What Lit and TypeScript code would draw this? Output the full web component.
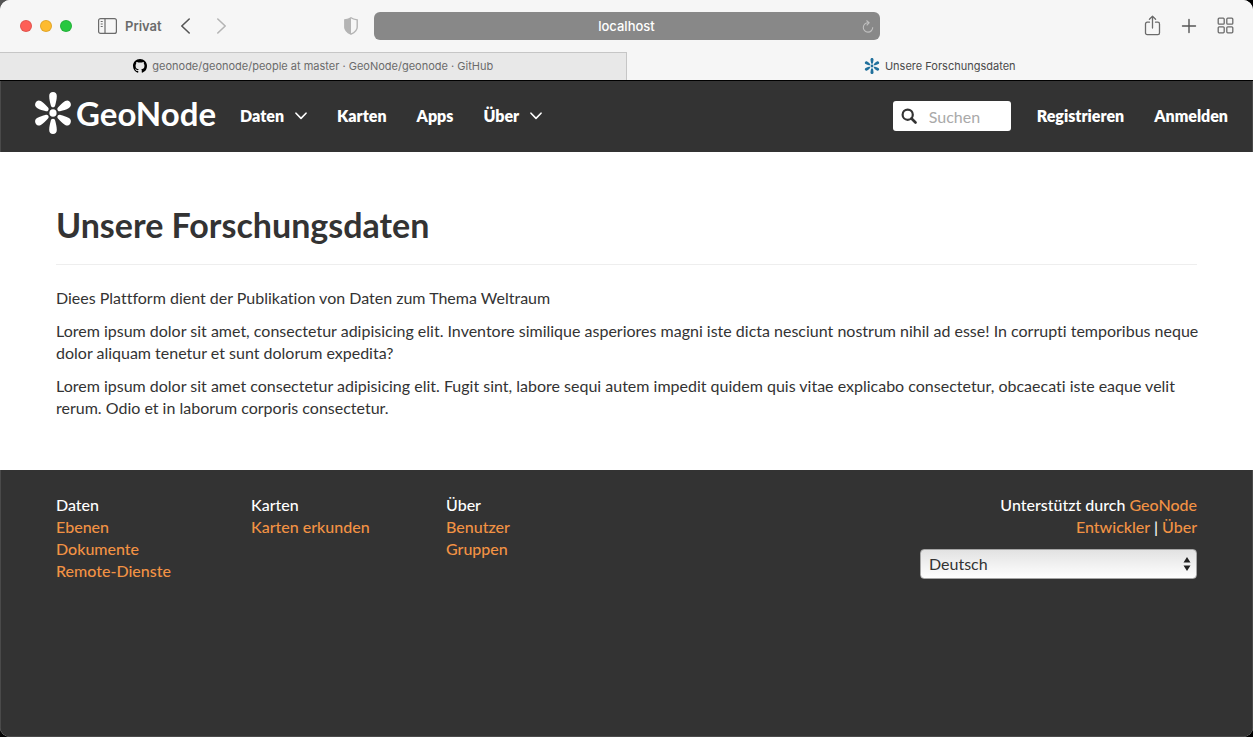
import { LitElement, html, css, svg } from "lit";
import { customElement, state } from "lit/decorators.js";

const petals = (color: string) => svg`
  <g fill=${color}>
    ${[0, 60, 120, 180, 240, 300].map(
      (a) => svg`<path transform="rotate(${a} 20 20)" d="M16.200 3.800C16.200 1.400 17.700 0 20 0s3.800 1.400 3.800 3.800c0 3.500-.9 6-1.500 8.600-.3 1.400-1 2.200-2.300 2.200s-2-.8-2.300-2.200C17.100 9.800 16.200 7.300 16.200 3.800Z" />`
    )}
    <circle cx="20" cy="20" r="3.600" />
  </g>`;

const chevron = html`<svg class="chevron" viewBox="0 0 12 8" aria-hidden="true">
  <path d="M1 1.200 6 6.400 11 1.200" fill="none" stroke="currentColor" stroke-width="1.600" stroke-linecap="round" stroke-linejoin="round" />
</svg>`;

@customElement("browser-chrome")
export class BrowserChrome extends LitElement {
  static styles = css`
    :host {
      display: block;
      background: #f6f6f6;
      color: #6b6b6b;
      font-family: Inter, "Liberation Sans", sans-serif;
    }
    button {
      border: 0;
      padding: 0;
      background: none;
      color: inherit;
      font: inherit;
      display: flex;
      align-items: center;
    }
    svg { display: block; }
    .toolbar {
      display: grid;
      grid-template-columns: 1fr minmax(200px, 506px) 1fr;
      height: 52px;
      align-items: center;
    }
    .left, .right { display: flex; align-items: center; }
    .left { padding-left: 20px; }
    .lights { display: flex; gap: 8px; margin-right: 26px; }
    .light {
      width: 12px;
      height: 12px;
      border-radius: 50%;
      box-sizing: border-box;
      border: 1px solid #0000001c;
    }
    .close { background: #fe5f57; }
    .minimize { background: #febb2e; }
    .zoom { background: #28c840; }
    .private {
      gap: 8px;
      font-size: 13px;
      font-weight: 600;
      margin-right: 18px;
    }
    .forward { margin-left: 25px; color: #b4b4b4; }
    .shield { margin-left: auto; margin-right: 16px; color: #b4b4b4; }
    .address { position: relative; }
    .address input {
      display: block;
      width: 100%;
      height: 28px;
      box-sizing: border-box;
      border: 0;
      border-radius: 6px;
      background: #888888;
      color: #ffffff;
      text-align: center;
      font: 500 13px Inter, "Liberation Sans", sans-serif;
    }
    .reload { position: absolute; right: 6px; top: 8px; color: #c0c0c0; }
    .right { justify-content: flex-end; gap: 20px; padding-right: 19px; }
    .tabs { display: flex; height: 28px; border-bottom: 1px solid #000000; box-sizing: content-box; }
    .tab {
      flex: 1 1 0;
      justify-content: center;
      gap: 5px;
      font-size: 11px;
      font-weight: 400;
      color: #4a4a4a;
    }
    .tab.inactive {
      background: #e8e8e8;
      color: #6b6b6b;
      box-shadow: inset 0 1px #c6c6c6, inset -1px 0 #c6c6c6;
    }
  `;

  render() {
    return html`
      <div class="toolbar">
        <div class="left">
          <div class="lights">
            <button class="light close" aria-label="Schließen"></button>
            <button class="light minimize" aria-label="Minimieren"></button>
            <button class="light zoom" aria-label="Vergrößern"></button>
          </div>
          <button class="private">
            <svg width="19" height="16" viewBox="0 0 19 16" fill="none" stroke="currentColor" stroke-width="1.200">
              <rect x=".6" y=".6" width="17.800" height="14.800" rx="2" />
              <path d="M7 .6v14.800M2.700 3.500h2M2.700 6h2M2.700 8.500h2" />
            </svg>
            Privat
          </button>
          <button aria-label="Zurück">
            <svg width="11" height="16" viewBox="0 0 11 16" fill="none" stroke="#555555" stroke-width="1.600" stroke-linecap="round" stroke-linejoin="round"><path d="M9.200 1 1.800 8l7.400 7" /></svg>
          </button>
          <button class="forward" aria-label="Vorwärts">
            <svg width="11" height="16" viewBox="0 0 11 16" fill="none" stroke="currentColor" stroke-width="1.600" stroke-linecap="round" stroke-linejoin="round"><path d="m1.800 1 7.400 7-7.400 7" /></svg>
          </button>
          <button class="shield" aria-label="Datenschutz">
            <svg width="14" height="18" viewBox="0 0 14 18"><path d="M7 .8C5.300 2 3.200 2.500.8 2.900v7.300c0 3.200 2.700 5.300 6.200 7 3.500-1.700 6.200-3.800 6.200-7V2.900C10.800 2.500 8.700 2 7 .8Z" fill="none" stroke="currentColor" stroke-width="1.400" /><path d="M7 .8C5.300 2 3.200 2.500.8 2.900v7.300c0 3.200 2.700 5.300 6.200 7Z" fill="currentColor" /></svg>
          </button>
        </div>
        <div class="address">
          <input aria-label="Adresse" .value=${"localhost"} />
          <button class="reload" aria-label="Neu laden">
            <svg width="12" height="13" viewBox="0 0 12 13" fill="none" stroke="currentColor" stroke-width="1.100"><path d="M6.500 2.800A4.700 4.700 0 1 0 10.700 7.300M4.500.5l2.600 2.300-2.400 2.500" /></svg>
          </button>
        </div>
        <div class="right">
          <button aria-label="Teilen">
            <svg width="17" height="22" viewBox="0 0 17 22" fill="none" stroke="currentColor" stroke-width="1.300" stroke-linecap="round" stroke-linejoin="round"><path d="M5.500 7.200H3.200A1.700 1.700 0 0 0 1.500 8.900v9a1.700 1.700 0 0 0 1.700 1.700h10.600a1.700 1.700 0 0 0 1.700-1.700v-9a1.700 1.700 0 0 0-1.700-1.700h-2.300M8.500 13V1.200M5.400 4.200l3.100-3 3.100 3" /></svg>
          </button>
          <button aria-label="Neuer Tab">
            <svg width="16" height="16" viewBox="0 0 16 16" stroke="#555555" stroke-width="1.400" stroke-linecap="round"><path d="M8 1.500v13M1.500 8h13" /></svg>
          </button>
          <button aria-label="Tabübersicht">
            <svg width="17" height="18" viewBox="0 0 17 18" fill="none" stroke="currentColor" stroke-width="1.300"><rect x="1.200" y="1.200" width="6" height="6" rx="1" /><rect x="9.800" y="1.200" width="6" height="6" rx="1" /><rect x="1.200" y="9.800" width="6" height="6" rx="1" /><rect x="9.800" y="9.800" width="6" height="6" rx="1" /></svg>
          </button>
        </div>
      </div>
      <div class="tabs">
        <button class="tab inactive">
          <svg width="14" height="14" viewBox="0 0 16 16" fill="#000000"><path d="M8 0C3.580 0 0 3.580 0 8c0 3.540 2.290 6.530 5.470 7.590.4.070.55-.17.55-.38 0-.19-.01-.82-.01-1.490-2.010.37-2.530-.49-2.690-.94-.09-.23-.48-.94-.82-1.130-.28-.15-.68-.52-.01-.53.63-.01 1.080.58 1.230.82.72 1.210 1.870.87 2.330.66.07-.52.28-.87.51-1.070-1.780-.2-3.640-.89-3.640-3.950 0-.87.31-1.590.82-2.150-.08-.2-.36-1.020.08-2.120 0 0 .67-.21 2.200.82.64-.18 1.320-.27 2-.27s1.360.09 2 .27c1.530-1.040 2.200-.82 2.200-.82.44 1.100.16 1.920.08 2.120.51.56.82 1.270.82 2.150 0 3.070-1.870 3.750-3.650 3.950.29.25.54.73.54 1.480 0 1.070-.01 1.930-.01 2.200 0 .21.15.46.55.38A8.010 8.010 0 0 0 16 8c0-4.420-3.580-8-8-8Z" /></svg>
          geonode/geonode/people at master · GeoNode/geonode · GitHub
        </button>
        <button class="tab">
          <svg width="16" height="16" viewBox="0 0 40 40">${petals("#20709c")}</svg>
          Unsere Forschungsdaten
        </button>
      </div>
    `;
  }
}

@customElement("site-nav")
export class SiteNav extends LitElement {
  static styles = css`
    :host {
      display: block;
      background: #333333;
      color: #ffffff;
      box-shadow: inset 1px 0 #4a4a4a, inset -1px 0 #4a4a4a;
    }
    nav {
      display: flex;
      align-items: center;
      box-sizing: border-box;
      height: 71px;
      gap: 30px;
      padding: 0 25px 2px 33px;
      font-size: 16px;
      font-weight: 800;
    }
    a { color: inherit; text-decoration: none; }
    .brand {
      display: flex;
      align-items: center;
      gap: 3px;
      font-size: 33px;
      font-weight: 700;
      line-height: 40px;
      margin-right: -6px;
      padding-bottom: 6px;
    }
    .brand svg { width: 40px; height: 42px; }
    .menu {
      display: flex;
      align-items: center;
      gap: 11px;
      padding: 0;
      border: 0;
      background: none;
      color: inherit;
      font: inherit;
    }
    .chevron { width: 12px; height: 8px; }
    .search {
      display: flex;
      align-items: center;
      gap: 12px;
      box-sizing: border-box;
      width: 118px;
      height: 30px;
      margin-left: auto;
      margin-right: -4px;
      padding: 0 8px;
      border-radius: 3px;
      background: #ffffff;
      color: #333333;
    }
    .search svg { flex: none; width: 16px; height: 16px; }
    .search input {
      width: 100%;
      min-width: 0;
      padding: 2px 0 0;
      border: 0;
      outline: 0;
      background: none;
      color: #333333;
      font: 400 16px Lato, sans-serif;
    }
    .search input::placeholder { color: #a9a9a9; }
  `;

  render() {
    return html`
      <nav>
        <a class="brand" href="#">
          <svg viewBox="0 0 40 40" preserveAspectRatio="none" aria-hidden="true">${petals("#ffffff")}</svg>
          <span>GeoNode</span>
        </a>
        <button class="menu">Daten ${chevron}</button>
        <a href="#karten">Karten</a>
        <a href="#apps">Apps</a>
        <button class="menu">Über ${chevron}</button>
        <label class="search">
          <svg viewBox="0 0 16 16" fill="none" stroke="currentColor" aria-hidden="true"><circle cx="6.700" cy="6.700" r="5.100" stroke-width="2.200" /><path d="m10.500 10.500 4 4" stroke-width="2.600" stroke-linecap="round" /></svg>
          <input type="text" placeholder="Suchen" aria-label="Suchen" />
        </label>
        <a href="#registrieren">Registrieren</a>
        <a href="#anmelden">Anmelden</a>
      </nav>
    `;
  }
}

@customElement("site-footer")
export class SiteFooter extends LitElement {
  @state() private columns = [
    { title: "Daten", links: ["Ebenen", "Dokumente", "Remote-Dienste"] },
    { title: "Karten", links: ["Karten erkunden"] },
    { title: "Über", links: ["Benutzer", "Gruppen"] },
  ];

  static styles = css`
    :host {
      display: block;
      background: #333333;
      color: #ffffff;
      box-shadow: inset 1px 0 #4a4a4a, inset -1px 0 #4a4a4a, inset 0 -1px #4a4a4a;
      font-size: 16px;
      font-weight: 500;
      line-height: 22px;
    }
    .inner {
      display: flex;
      padding: 24px 56px;
    }
    .column { flex: 0 0 195px; }
    .title, .links { margin: 0; padding: 0; list-style: none; font: inherit; }
    a { color: #f29244; text-decoration: none; }
    .credits { flex: 0 1 277px; margin-left: auto; text-align: right; }
    .picker { display: block; position: relative; margin-top: 11px; }
    .picker select {
      display: block;
      appearance: none;
      width: 100%;
      height: 30px;
      padding: 0 30px 2px 8px;
      border: 1px solid #a5a5a5;
      border-radius: 4px;
      background: linear-gradient(#e2e2e2, #ffffff);
      color: #333333;
      font: 400 16px Lato, sans-serif;
    }
    .picker svg {
      position: absolute;
      right: 6px;
      top: 8px;
      width: 8px;
      height: 14px;
      fill: #222222;
      pointer-events: none;
    }
  `;

  render() {
    return html`
      <div class="inner">
        ${this.columns.map(
          (c) => html`<section class="column">
            <h2 class="title">${c.title}</h2>
            <ul class="links">${c.links.map((l) => html`<li><a href="#">${l}</a></li>`)}</ul>
          </section>`
        )}
        <div class="credits">
          <div>Unterstützt durch <a href="#">GeoNode</a></div>
          <div><a href="#">Entwickler</a> | <a href="#">Über</a></div>
          <label class="picker">
            <select aria-label="Sprache"><option>Deutsch</option><option>English</option></select>
            <svg viewBox="0 0 8 14" aria-hidden="true"><path d="M4 0 7.500 5.500H.5ZM4 14 .5 8.500h7Z" /></svg>
          </label>
        </div>
      </div>
    `;
  }
}

@customElement("app-root")
export class AppRoot extends LitElement {
  static styles = css`
    :host {
      display: block;
      background: linear-gradient(100deg, #555555, #000000 10%, #000000);
      font-family: Lato, sans-serif;
      font-variant-ligatures: none;
    }
    .window {
      display: flex;
      flex-direction: column;
      min-height: 100vh;
      border-radius: 10px;
      overflow: hidden;
      background: #ffffff;
    }
    main {
      padding: 53px 56px 51px;
      color: #333333;
      font-size: 16px;
      font-weight: 400;
      line-height: 22px;
    }
    h1 {
      margin: 0 0 22px;
      padding-bottom: 19px;
      border-bottom: 1px solid #eeeeee;
      font-size: 34px;
      font-weight: 700;
      line-height: 40px;
    }
    p { margin: 0 -12px 11px 0; }
    p:last-child { margin-bottom: 0; }
    site-footer { flex: 1; }
  `;

  render() {
    return html`
      <div class="window">
        <browser-chrome></browser-chrome>
        <site-nav></site-nav>
        <main>
          <h1>Unsere Forschungsdaten</h1>
          <p>Diees Plattform dient der Publikation von Daten zum Thema Weltraum</p>
          <p>Lorem ipsum dolor sit amet, consectetur adipisicing elit. Inventore similique asperiores magni iste dicta nesciunt nostrum nihil ad esse! In corrupti temporibus neque dolor aliquam tenetur et sunt dolorum expedita?</p>
          <p>Lorem ipsum dolor sit amet consectetur adipisicing elit. Fugit sint, labore sequi autem impedit quidem quis vitae explicabo consectetur, obcaecati iste eaque velit rerum. Odio et in laborum corporis consectetur.</p>
        </main>
        <site-footer></site-footer>
      </div>
    `;
  }
}
